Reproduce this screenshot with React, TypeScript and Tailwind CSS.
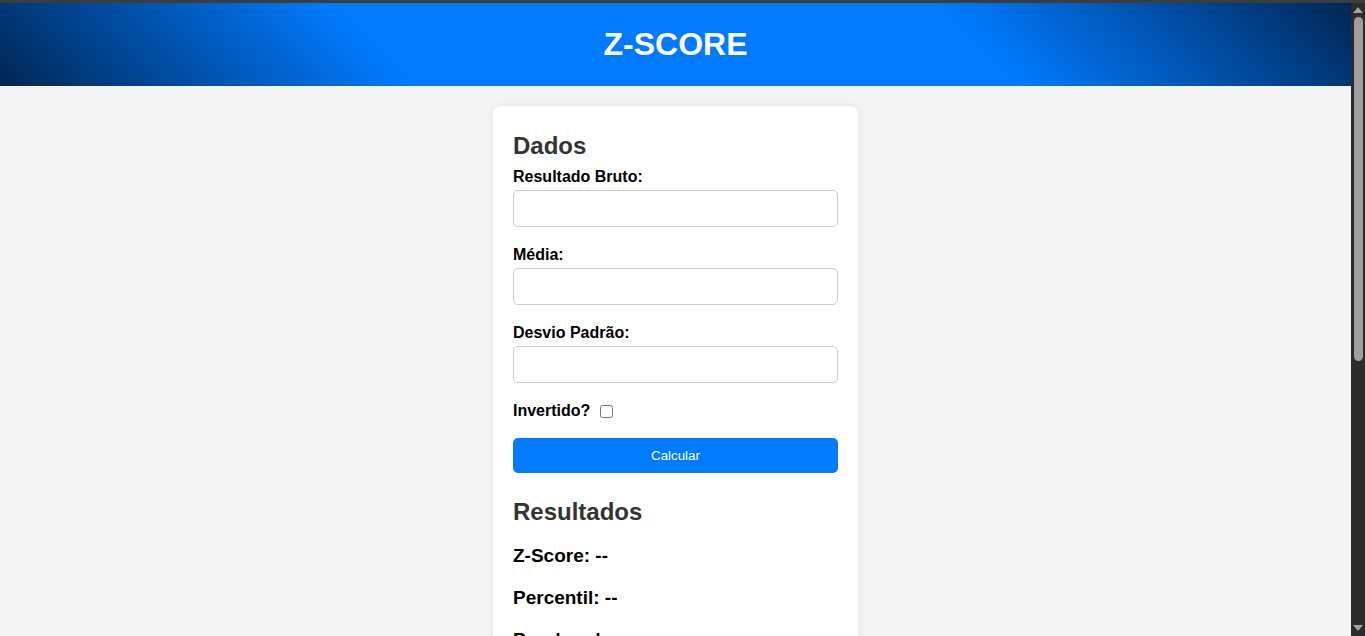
import React, { useState } from "react";

function Field({ label }: { label: string }) {
  return (
    <div className="mb-[19px]">
      <label className="block text-[16px] leading-[18px] font-bold text-black mb-[4px]">
        {label}
      </label>
      <input
        type="number"
        className="block w-full h-[37px] px-[10px] bg-white border border-[#ccc] rounded-[5px] text-[16px] outline-none"
      />
    </div>
  );
}

function FakeScrollbar() {
  return (
    <div className="w-[14px] shrink-0 bg-[#2b2b2b] flex flex-col items-center">
      <div className="mt-[4px] w-0 h-0 border-l-[5px] border-r-[5px] border-b-[6px] border-l-transparent border-r-transparent border-b-[#a3a3a3]" />
      <div className="mt-[4px] w-[9px] h-[344px] rounded-full bg-[#9f9f9f]" />
      <div className="flex-1" />
      <div className="mb-[5px] w-0 h-0 border-l-[5px] border-r-[5px] border-t-[6px] border-l-transparent border-r-transparent border-t-[#a3a3a3]" />
    </div>
  );
}

export default function App() {
  const [inverted, setInverted] = useState(false);

  return (
    <div className="h-[636px] overflow-hidden flex flex-col bg-[#f4f4f4] font-['Liberation_Sans',Arial,sans-serif]">
      <div className="h-[3px] shrink-0 bg-[#3c3c3c]" />
      <div className="flex flex-1 min-h-0">
        <div className="flex-1 min-w-0 overflow-hidden">
          <header className="h-[83px] flex items-center justify-center bg-[linear-gradient(45deg,#002654_0%,#007bff_29%,#007bff_71%,#002654_100%)]">
            <h1 className="text-[32px] leading-[37px] font-bold text-white">Z-SCORE</h1>
          </header>

          <main className="flex justify-center pt-[20px] pb-[20px]">
            <div className="w-[365px] bg-white rounded-[8px] p-[20px] shadow-[0_0_10px_rgba(0,0,0,0.08)]">
              <h2 className="mt-[6px] mb-[9px] text-[24px] leading-[27px] font-bold text-[#333]">Dados</h2>

              <Field label="Resultado Bruto:" />
              <Field label="Média:" />
              <Field label="Desvio Padrão:" />

              <div className="flex items-center h-[18px]">
                <label className="text-[16px] leading-[18px] font-bold text-black">Invertido?</label>
                <input
                  type="checkbox"
                  checked={inverted}
                  onChange={(e) => setInverted(e.target.checked)}
                  className="ml-[10px] w-[13px] h-[13px]"
                />
              </div>

              <button className="mt-[18px] w-full h-[35px] bg-[#007bff] rounded-[5px] text-white text-[13.33px]">
                Calcular
              </button>

              <h2 className="mt-[25px] text-[24px] leading-[27px] font-bold text-[#333]">Resultados</h2>
              <p className="mt-[20px] text-[19px] leading-[22px] font-bold text-black">Z-Score: --</p>
              <p className="mt-[20px] text-[19px] leading-[22px] font-bold text-black">Percentil: --</p>
              <p className="mt-[20px] text-[19px] leading-[22px] font-bold text-black">Ponderado: --</p>
            </div>
          </main>
        </div>
        <FakeScrollbar />
      </div>
    </div>
  );
}
